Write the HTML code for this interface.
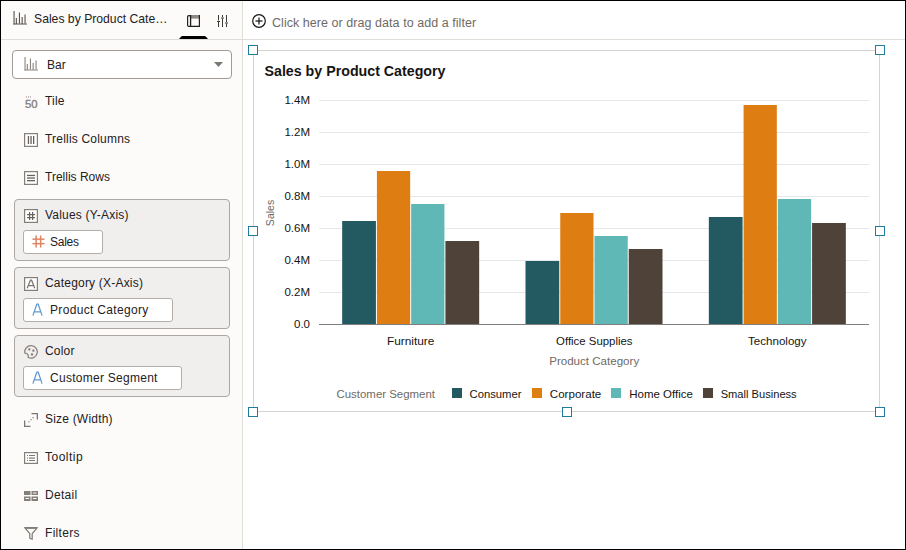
<!DOCTYPE html>
<html><head><meta charset="utf-8">
<style>
*{margin:0;padding:0;box-sizing:border-box}
html,body{width:906px;height:550px;overflow:hidden;background:#000}
body{font-family:"Liberation Sans",sans-serif;color:#24201d;position:relative}
.a{position:absolute;white-space:nowrap}
#side{position:absolute;left:1px;top:1px;width:241px;height:548px;background:#fcfbf9}
#main{position:absolute;left:243px;top:1px;width:662px;height:548px;background:#fff}
#vsep{position:absolute;left:242px;top:1px;width:1px;height:548px;background:#e0dcd8}
#hsep{position:absolute;left:1px;top:39px;width:904px;height:1px;background:#e0dcd8}
.t12{font-size:12px;line-height:14px}
.ic{position:absolute}
.box{position:absolute;left:14px;width:216px;height:62px;background:#f1efed;border:1px solid #aca7a2;border-radius:4px}
.pill{position:absolute;left:23px;height:24px;background:#fff;border:1px solid #b3aea9;border-radius:3px}
.ct{font-size:11.5px;line-height:13px;color:#161513}
.hd{position:absolute;width:10px;height:10px;border:1px solid #1f7c9d;background:#fff}
</style></head><body>
<div id="side"></div>
<div id="main"></div>
<div id="vsep"></div>
<div id="hsep"></div>

<!-- sidebar header -->
<svg class="ic" style="left:13px;top:11px" width="15" height="14" viewBox="0 0 15 14">
 <g fill="#56514c"><rect x="0.5" y="0" width="1.1" height="13.5"/><rect x="0.5" y="12.5" width="13.5" height="1"/><rect x="2.8" y="7" width="1.1" height="6"/><rect x="5.9" y="1.5" width="1.1" height="11"/><rect x="8.6" y="6" width="1.1" height="7"/><rect x="11.5" y="3.5" width="1.1" height="9"/></g>
</svg>
<div class="a t12" style="left:34px;top:12px;font-size:12.2px">Sales by Product Cate…</div>
<svg class="ic" style="left:187px;top:15px" width="13" height="12" viewBox="0 0 13 12">
 <rect x="4" y="0" width="8.5" height="3.6" fill="#8f8984"/>
 <g fill="none" stroke="#1f1c1a" stroke-width="1.15"><rect x="0.6" y="0.6" width="2.9" height="10.8" rx="1.2"/><path d="M3.6 0 V11.4 H12.4 V0"/></g>
</svg>
<svg class="ic" style="left:217px;top:15px" width="12" height="13" viewBox="0 0 12 13">
 <g fill="#3d3935"><rect x="1" y="0" width="1" height="5.5"/><rect x="1" y="7" width="1" height="5"/><rect x="5" y="0" width="1" height="2"/><rect x="5" y="3.5" width="1" height="8.5"/><rect x="9" y="0" width="1" height="7"/><rect x="9" y="8.5" width="1" height="3.5"/><rect x="0" y="6" width="3" height="1"/><rect x="4" y="2.5" width="3" height="1"/><rect x="8" y="7.5" width="3" height="1"/></g>
</svg>
<svg class="ic" style="left:179px;top:36px" width="29" height="3" viewBox="0 0 29 3"><path d="M0 3 L2.2 0.4 Q2.6 0 3.4 0 L25.6 0 Q26.4 0 26.8 0.4 L29 3Z" fill="#000"/></svg>

<!-- filter bar -->
<svg class="ic" style="left:252px;top:14px" width="14" height="14" viewBox="0 0 14 14">
 <circle cx="7" cy="7" r="6.3" fill="none" stroke="#161513" stroke-width="1.2"/>
 <rect x="3.5" y="6.4" width="7" height="1.2" fill="#161513"/><rect x="6.4" y="3.5" width="1.2" height="7" fill="#161513"/>
</svg>
<div class="a t12" style="left:272px;top:16px;font-size:12.5px;letter-spacing:0.05px;color:#6f6a65">Click here or drag data to add a filter</div>

<!-- dropdown -->
<div class="a" style="left:12px;top:50px;width:220px;height:29px;border:1px solid #a19b96;border-radius:4px;background:#fff"></div>
<svg class="ic" style="left:24px;top:57px" width="15" height="14" viewBox="0 0 15 14">
 <g fill="#8a847f"><rect x="0.5" y="0" width="1.1" height="13.5"/><rect x="0.5" y="12.5" width="13.5" height="1"/><rect x="2.8" y="7" width="1.1" height="6"/><rect x="5.9" y="1.5" width="1.1" height="11"/><rect x="8.6" y="6" width="1.1" height="7"/><rect x="11.5" y="3.5" width="1.1" height="9"/></g>
</svg>
<div class="a t12" style="left:47px;top:58px">Bar</div>
<svg class="ic" style="left:214px;top:62px" width="9" height="5" viewBox="0 0 9 5"><path d="M0 0H9L4.5 5Z" fill="#7d7772"/></svg>


<!-- list items -->
<svg class="ic" style="left:25px;top:95px" width="13" height="13" viewBox="0 0 13 13">
 <g fill="#857f7a"><rect x="1" y="1.5" width="1" height="1"/><rect x="3" y="1.5" width="1" height="1"/><rect x="5" y="1.5" width="1" height="1"/></g>
 <text x="-0.1" y="12.7" font-family="Liberation Sans" font-size="11" textLength="12.6" lengthAdjust="spacingAndGlyphs" fill="#857f7a" stroke="#857f7a" stroke-width="0.35">50</text>
</svg>
<div class="a t12" style="left:45px;top:94px;letter-spacing:0.2px">Tile</div>

<svg class="ic" style="left:24px;top:133px" width="14" height="14" viewBox="0 0 14 14">
 <rect x="0.6" y="0.6" width="12.8" height="12.8" fill="#fff" stroke="#857f7a" stroke-width="1.2"/>
 <g fill="#66615c"><rect x="3.8" y="3" width="1.3" height="8"/><rect x="6.4" y="3" width="1.3" height="8"/><rect x="9" y="3" width="1.3" height="8"/></g>
</svg>
<div class="a t12" style="left:45px;top:132px;letter-spacing:0.2px">Trellis Columns</div>

<svg class="ic" style="left:24px;top:171px" width="14" height="14" viewBox="0 0 14 14">
 <rect x="0.6" y="0.6" width="12.8" height="12.8" fill="#fff" stroke="#857f7a" stroke-width="1.2"/>
 <g fill="#66615c"><rect x="3" y="3.8" width="8" height="1.3"/><rect x="3" y="6.4" width="8" height="1.3"/><rect x="3" y="9" width="8" height="1.3"/></g>
</svg>
<div class="a t12" style="left:45px;top:170px">Trellis Rows</div>

<div class="box" style="top:199px"></div>
<svg class="ic" style="left:24px;top:209px" width="14" height="14" viewBox="0 0 14 14">
 <rect x="0.6" y="0.6" width="12.8" height="12.8" fill="#fff" stroke="#857f7a" stroke-width="1.2"/>
 <g fill="#66615c"><rect x="5" y="3" width="1.2" height="8"/><rect x="8" y="3" width="1.2" height="8"/><rect x="3" y="5" width="8" height="1.2"/><rect x="3" y="8" width="8" height="1.2"/></g>
</svg>
<div class="a t12" style="left:45px;top:208px;letter-spacing:0.2px">Values (Y-Axis)</div>
<div class="pill" style="top:230px;width:80px"></div>
<svg class="ic" style="left:32px;top:235px" width="13" height="13" viewBox="0 0 13 13">
 <g fill="#dc8664"><rect x="3.4" y="0.5" width="1.5" height="12"/><rect x="7.9" y="0.5" width="1.5" height="12"/><rect x="0.5" y="3.4" width="12" height="1.5"/><rect x="0.5" y="7.9" width="12" height="1.5"/></g>
</svg>
<div class="a t12" style="left:50px;top:235px;letter-spacing:-0.25px">Sales</div>

<div class="box" style="top:267px"></div>
<svg class="ic" style="left:24px;top:277px" width="14" height="14" viewBox="0 0 14 14">
 <rect x="0.6" y="0.6" width="12.8" height="12.8" fill="#fff" stroke="#857f7a" stroke-width="1.2"/>
 <path d="M3.2 11.3 L6.4 3.2 H7.6 L10.8 11.3 M4.4 8.5 H9.6" fill="none" stroke="#7d7772" stroke-width="1.25"/>
</svg>
<div class="a t12" style="left:45px;top:276px;letter-spacing:0.2px">Category (X-Axis)</div>
<div class="pill" style="top:298px;width:150px"></div>
<svg class="ic" style="left:32px;top:303px" width="12" height="13" viewBox="0 0 12 13">
 <path d="M0.9 12.6 L4.8 1.2 H6.2 L10.1 12.6 M2.5 8.8 H8.5" fill="none" stroke="#5f9bd2" stroke-width="1.25"/>
</svg>
<div class="a t12" style="left:50px;top:303px;letter-spacing:0.33px">Product Category</div>

<div class="box" style="top:335px"></div>
<svg class="ic" style="left:24px;top:345px" width="14" height="14" viewBox="0 0 14 14">
 <path d="M0.9 8.2 A6.25 6.25 0 1 1 4.2 12.5 Q4.9 8.4 0.9 8.2 Z" fill="none" stroke="#857f7a" stroke-width="1.25" stroke-linejoin="round"/>
 <g fill="#7d7772"><circle cx="5.3" cy="4.4" r="1.15"/><circle cx="9.4" cy="5.7" r="1.15"/><circle cx="8" cy="9.5" r="1.15"/></g>
</svg>
<div class="a t12" style="left:45px;top:344px;letter-spacing:0.2px">Color</div>
<div class="pill" style="top:366px;width:159px"></div>
<svg class="ic" style="left:32px;top:371px" width="12" height="13" viewBox="0 0 12 13">
 <path d="M0.9 12.6 L4.8 1.2 H6.2 L10.1 12.6 M2.5 8.8 H8.5" fill="none" stroke="#5f9bd2" stroke-width="1.25"/>
</svg>
<div class="a t12" style="left:50px;top:371px;letter-spacing:0.27px">Customer Segment</div>

<svg class="ic" style="left:24px;top:413px" width="14" height="14" viewBox="0 0 14 14">
 <path d="M7.5 0.65 H13.35 V6.5 M0.65 7.5 V13.35 H6.5" fill="none" stroke="#7d7772" stroke-width="1.3"/>
 <g fill="#857f7a"><rect x="8.5" y="4" width="1.2" height="1.2"/><rect x="6.4" y="6.1" width="1.2" height="1.2"/><rect x="4.3" y="8.2" width="1.2" height="1.2"/></g>
</svg>
<div class="a t12" style="left:45px;top:412px;letter-spacing:0.2px">Size (Width)</div>

<svg class="ic" style="left:24px;top:452px" width="14" height="12" viewBox="0 0 14 12">
 <rect x="0.6" y="0.6" width="12.8" height="10.8" fill="#fff" stroke="#857f7a" stroke-width="1.2"/>
 <g fill="#7d7772"><rect x="3" y="3" width="1" height="1"/><rect x="5" y="3" width="6" height="1"/><rect x="3" y="5.5" width="1" height="1.2"/><rect x="5" y="5.5" width="6" height="1.2"/><rect x="3" y="8" width="1" height="1"/><rect x="5" y="8" width="6" height="1"/></g>
</svg>
<div class="a t12" style="left:45px;top:450px;letter-spacing:0.5px">Tooltip</div>

<svg class="ic" style="left:24px;top:491px" width="14" height="10" viewBox="0 0 14 10">
 <g fill="#857f7a"><rect x="0" y="0" width="6.5" height="4"/><rect x="7.5" y="0" width="6.5" height="4"/><rect x="0" y="5.5" width="6.5" height="4.5"/><rect x="7.5" y="5.5" width="6.5" height="4.5"/></g>
 <g fill="#fcfbf9"><rect x="9" y="1.5" width="3.5" height="1"/><rect x="1.5" y="7" width="3.5" height="1"/><rect x="9" y="7" width="3.5" height="1"/></g>
</svg>
<div class="a t12" style="left:45px;top:488px;letter-spacing:0.3px">Detail</div>

<svg class="ic" style="left:24px;top:527px" width="14" height="13" viewBox="0 0 14 13">
 <path d="M0.7 0.7 H13.3 L8.2 6.6 V12.3 L5.8 11.2 V6.6 Z" fill="none" stroke="#7d7772" stroke-width="1.2" stroke-linejoin="round"/>
 <rect x="1" y="0.3" width="12" height="1.6" fill="#857f7a"/>
</svg>
<div class="a t12" style="left:45px;top:526px;letter-spacing:0.3px">Filters</div>

<!-- chart -->
<svg style="position:absolute;left:0;top:0" width="906" height="550" viewBox="0 0 906 550" font-family="Liberation Sans">
 <g fill="#d8d3ce"><rect x="253" y="50" width="627" height="1"/><rect x="253" y="411" width="627" height="1"/><rect x="253" y="50" width="1" height="362"/><rect x="879" y="50" width="1" height="362"/></g>
 <text x="264.5" y="76" font-size="14" font-weight="bold" fill="#161513" textLength="181" lengthAdjust="spacingAndGlyphs">Sales by Product Category</text>
 <rect x="319" y="100" width="550" height="1" fill="#e4e7eb"/><rect x="319" y="132" width="550" height="1" fill="#e4e7eb"/><rect x="319" y="164" width="550" height="1" fill="#e4e7eb"/><rect x="319" y="196" width="550" height="1" fill="#e4e7eb"/><rect x="319" y="228" width="550" height="1" fill="#e4e7eb"/><rect x="319" y="260" width="550" height="1" fill="#e4e7eb"/><rect x="319" y="292" width="550" height="1" fill="#e4e7eb"/>
 <g font-size="11.5" fill="#161513"><text x="310" y="104" text-anchor="end">1.4M</text><text x="310" y="136" text-anchor="end">1.2M</text><text x="310" y="168" text-anchor="end">1.0M</text><text x="310" y="200" text-anchor="end">0.8M</text><text x="310" y="232" text-anchor="end">0.6M</text><text x="310" y="264" text-anchor="end">0.4M</text><text x="310" y="296" text-anchor="end">0.2M</text><text x="310" y="328" text-anchor="end">0.0</text></g>
 <rect x="342.17" y="221" width="33.75" height="103" fill="#235a62"/>
<rect x="376.92" y="171" width="33.25" height="153" fill="#de7d12"/>
<rect x="411.17" y="204" width="33.25" height="120" fill="#5fb8b5"/>
<rect x="445.42" y="241" width="33.75" height="83" fill="#4e4239"/>
<rect x="525.50" y="261" width="33.75" height="63" fill="#235a62"/>
<rect x="560.25" y="213" width="33.25" height="111" fill="#de7d12"/>
<rect x="594.50" y="236" width="33.25" height="88" fill="#5fb8b5"/>
<rect x="628.75" y="249" width="33.75" height="75" fill="#4e4239"/>
<rect x="708.83" y="217" width="33.75" height="107" fill="#235a62"/>
<rect x="743.58" y="105" width="33.25" height="219" fill="#de7d12"/>
<rect x="777.83" y="199" width="33.25" height="125" fill="#5fb8b5"/>
<rect x="812.08" y="223" width="33.75" height="101" fill="#4e4239"/>
 <rect x="319" y="324" width="550" height="1" fill="#7f7f7f"/>
 <text transform="translate(274 213) rotate(-90)" text-anchor="middle" font-size="10.5" fill="#6f6a65">Sales</text>
 <g font-size="11.5" fill="#161513" text-anchor="middle">
  <text x="410.7" y="345" textLength="47.5" lengthAdjust="spacingAndGlyphs">Furniture</text><text x="594.3" y="345" textLength="76.5" lengthAdjust="spacingAndGlyphs">Office Supplies</text><text x="777.3" y="345" textLength="58.5" lengthAdjust="spacingAndGlyphs">Technology</text>
 </g>
 <text x="594.2" y="365" font-size="11.5" fill="#6f6a65" text-anchor="middle" textLength="90" lengthAdjust="spacingAndGlyphs">Product Category</text>
 <g font-size="11.5">
  <text x="336.5" y="398" fill="#6f6a65" textLength="98.5" lengthAdjust="spacingAndGlyphs">Customer Segment</text>
  <rect x="452" y="388" width="10" height="10" fill="#235a62"/><text x="469.5" y="398" fill="#161513" textLength="52" lengthAdjust="spacingAndGlyphs">Consumer</text>
  <rect x="532" y="388" width="10" height="10" fill="#de7d12"/><text x="549.8" y="398" fill="#161513" textLength="51.5" lengthAdjust="spacingAndGlyphs">Corporate</text>
  <rect x="611" y="388" width="10" height="10" fill="#5fb8b5"/><text x="629.3" y="398" fill="#161513" textLength="63.5" lengthAdjust="spacingAndGlyphs">Home Office</text>
  <rect x="703" y="388" width="10" height="10" fill="#4e4239"/><text x="720.7" y="398" fill="#161513" textLength="76" lengthAdjust="spacingAndGlyphs">Small Business</text>
 </g>
</svg>
<div class="hd" style="left:248px;top:45px"></div>
<div class="hd" style="left:875px;top:45px"></div>
<div class="hd" style="left:248px;top:226px"></div>
<div class="hd" style="left:875px;top:226px"></div>
<div class="hd" style="left:248px;top:407px"></div>
<div class="hd" style="left:562px;top:407px"></div>
<div class="hd" style="left:875px;top:407px"></div>
</body></html>
